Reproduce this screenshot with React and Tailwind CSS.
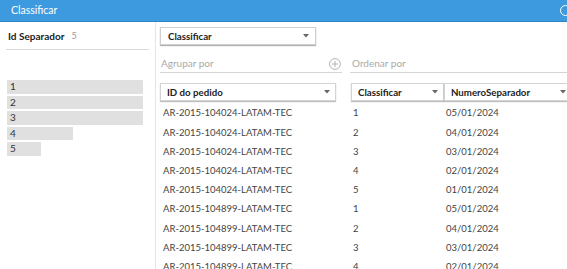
import React from "react";

const ids = [
  "AR-2015-104024-LATAM-TEC",
  "AR-2015-104024-LATAM-TEC",
  "AR-2015-104024-LATAM-TEC",
  "AR-2015-104024-LATAM-TEC",
  "AR-2015-104024-LATAM-TEC",
  "AR-2015-104899-LATAM-TEC",
  "AR-2015-104899-LATAM-TEC",
  "AR-2015-104899-LATAM-TEC",
  "AR-2015-104899-LATAM-TEC",
];

const ranks = ["1", "2", "3", "4", "5", "1", "2", "3", "4"];
const dates = [
  "05/01/2024",
  "04/01/2024",
  "03/01/2024",
  "02/01/2024",
  "01/01/2024",
  "05/01/2024",
  "04/01/2024",
  "03/01/2024",
  "02/01/2024",
];

const bars = [
  { label: "1", w: "w-[136px]" },
  { label: "2", w: "w-[136px]" },
  { label: "3", w: "w-[136px]" },
  { label: "4", w: "w-[66px]" },
  { label: "5", w: "w-[34px]" },
];

const Caret = () => (
  <svg width="6" height="4" viewBox="0 0 6 4" className="shrink-0">
    <path d="M0 0h6L3 3.5z" fill="#666" />
  </svg>
);

const HeaderBox = ({ label, className = "" }) => (
  <div
    className={`h-[18px] shrink-0 flex items-center justify-between pl-[6px] pr-[5px] border border-[#d4d4d4] bg-white shadow-[0_1px_1px_rgba(0,0,0,0.25)] ${className}`}
  >
    <span className="font-bold text-[9.7px] text-[#222]">{label}</span>
    <Caret />
  </div>
);

export default function App() {
  return (
    <div className="w-[567px] h-[269px] overflow-hidden bg-white font-['Lato',sans-serif] relative">
      {/* title bar */}
      <div className="h-[22px] bg-[#3d9ade] border-b border-[#2f84c4] flex items-center pl-[11px] relative">
        <span className="text-white text-[10.5px]">Classificar</span>
        <div className="absolute left-[560px] top-[5px] w-[11px] h-[11px] rounded-full border border-white" />
      </div>

      <div className="flex h-[247px]">
        {/* left panel */}
        <div className="w-[156px] shrink-0 border-r border-[#e4e4e4] flex flex-col">
          <div className="h-[28px] mx-[6px] border-b border-[#d9d9d9] flex items-center gap-[7px] pl-[2px] pt-[1px]">
            <span className="font-bold text-[10px] text-[#222]">Id Separador</span>
            <span className="text-[9px] text-[#999]">5</span>
          </div>
          <div className="flex-1 border-l border-[#3d9ade] -ml-px mt-[5px] pt-[25px] pl-[7px] flex flex-col gap-[2px]">
            {bars.map((b, i) => (
              <div
                key={i}
                className={`${b.w} h-[13.5px] bg-[#e0e0e0] flex items-center pl-[3px] text-[10px] text-[#333]`}
              >
                {b.label}
              </div>
            ))}
          </div>
        </div>

        {/* right area */}
        <div className="flex-1 pl-[4px] pt-[5px] min-w-0">
          <div className="w-[156px] h-[18px] flex items-center justify-between pl-[7px] pr-[6px] border border-[#cfcfcf] shadow-[0_1px_1px_rgba(0,0,0,0.3)]">
            <span className="font-bold text-[9.7px] text-[#222]">Classificar</span>
            <Caret />
          </div>

          <div className="flex mt-[10px]">
            {/* group column */}
            <div className="w-[182px] shrink-0">
              <div className="h-[18px] border-b border-[#d4d4d4] flex items-center justify-between pl-[1px] pr-[1px]">
                <span className="text-[10px] text-[#aaa]">Agrupar por</span>
                <svg width="12" height="12" viewBox="0 0 12 12">
                  <circle cx="6" cy="6" r="5.4" fill="none" stroke="#aaa" strokeWidth="0.9" />
                  <path d="M6 2.8v6.4M2.8 6h6.4" stroke="#aaa" strokeWidth="0.9" />
                </svg>
              </div>
              <HeaderBox label="ID do pedido" className="w-[176px] mt-[10px]" />
              <div className="mt-[3px]">
                {ids.map((t, i) => (
                  <div key={i} className="h-[19.2px] flex items-center pl-[3px] text-[9.5px] text-[#444]">
                    {t}
                  </div>
                ))}
              </div>
            </div>

            {/* sort column */}
            <div className="ml-[8px] flex-1 min-w-0">
              <div className="h-[18px] border-b border-[#d4d4d4] flex items-center pl-[2px]">
                <span className="text-[10px] text-[#aaa]">Ordenar por</span>
              </div>
              <div className="flex mt-[10px] ml-[1px]">
                <HeaderBox label="Classificar" className="w-[93px]" />
                <HeaderBox label="NumeroSeparador" className="w-[128px]" />
              </div>
              <div className="mt-[3px] ml-[1px]">
                {ranks.map((r, i) => (
                  <div key={i} className="h-[19.2px] flex items-center text-[9.5px] text-[#444]">
                    <span className="w-[93px] pl-[2px]">{r}</span>
                    <span className="pl-[2px]">{dates[i]}</span>
                  </div>
                ))}
              </div>
            </div>
          </div>
        </div>
      </div>
    </div>
  );
}
